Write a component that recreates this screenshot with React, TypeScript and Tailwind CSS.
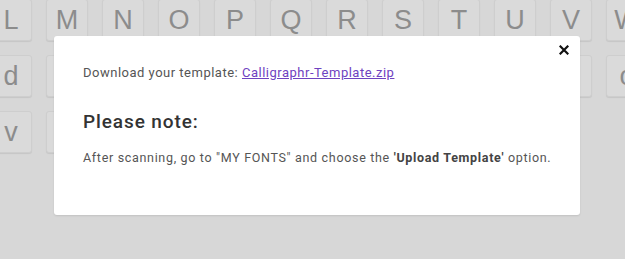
import React from "react";

function Key({ ch }: { ch: string }) {
  return (
    <div className="w-[42px] h-[42px] shrink-0 rounded-[3px] bg-[#dadada] border border-[#cecece] shadow-[0_1px_1px_rgba(0,0,0,0.08)] flex items-center justify-center text-[27px] leading-none text-[#8c8c8c] font-['Liberation_Sans',Arial,sans-serif]">
      {ch}
    </div>
  );
}

function Row({ chars }: { chars: string[] }) {
  return (
    <div className="flex gap-[14px]">
      {chars.map((c, i) => (
        <Key key={i} ch={c} />
      ))}
    </div>
  );
}

export default function App() {
  const row1 = "LMNOPQRSTUVW".split("");
  const row2 = "defghijklmno".split("");
  const row3 = "vwxyz0".split("");
  return (
    <div className="relative w-[625px] h-[259px] overflow-hidden bg-[#d7d7d7] font-['Roboto',sans-serif]">
      <div className="flex flex-col gap-[14px] ml-[-10px] mt-[-1px]">
        <Row chars={row1} />
        <Row chars={row2} />
        <Row chars={row3} />
      </div>
      <div className="absolute left-[54px] top-[36px] w-[526px] h-[179px] bg-white rounded-[3px] shadow-[0_1px_2px_rgba(0,0,0,0.1)]">
        <button className="absolute left-[504px] top-[8px] w-[12px] h-[12px] flex items-center justify-center">
          <svg width="10" height="10" viewBox="0 0 10 10">
            <path d="M1.5 1.5 L8.5 8.5 M8.5 1.5 L1.5 8.5" stroke="#111" strokeWidth="2.2" strokeLinecap="square" />
          </svg>
        </button>
        <div className="pl-[29px] pt-[28px] pr-[20px]">
          <p className="text-[13px] leading-[18px] tracking-[0.5px] text-[#555]">
            Download your template:{" "}
            <a href="#" className="text-[#6f42c1] underline">
              Calligraphr-Template.zip
            </a>
          </p>
          <h3 className="mt-[28px] text-[19px] leading-[24px] tracking-[0.9px] font-medium text-[#333]">Please note:</h3>
          <p className="mt-[16px] text-[12.5px] leading-[16px] tracking-[0.68px] text-[#555]">
            After scanning, go to "MY FONTS" and choose the{" "}
            <span className="font-bold text-[#444]">'Upload Template'</span> option.
          </p>
        </div>
      </div>
    </div>
  );
}
